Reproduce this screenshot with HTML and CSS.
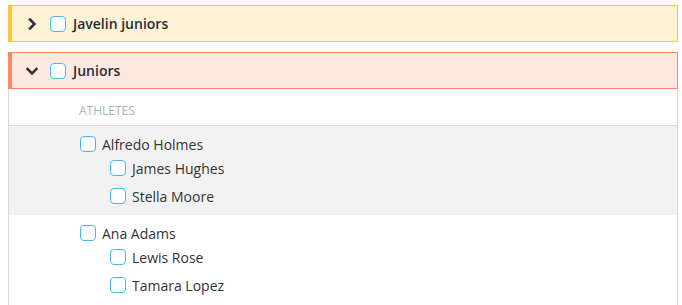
FILE: index.html
```html
<!DOCTYPE html>
<html>
<head>
<meta charset="utf-8">
<link rel="stylesheet" href="styles.css">
</head>
<body>
<div class="tree">
  <div class="group-head head-yellow">
    <span class="chev">
      <svg width="12" height="12" viewBox="0 0 12 12"><polyline points="4,1.5 8.5,6 4,10.5" fill="none" stroke="#333" stroke-width="2.6" stroke-linecap="square"/></svg>
    </span>
    <span class="box"></span>
    <span class="head-label">Javelin juniors</span>
  </div>

  <div class="group-head head-red">
    <span class="chev">
      <svg width="12" height="12" viewBox="0 0 12 12"><polyline points="1.5,4 6,8.5 10.5,4" fill="none" stroke="#333" stroke-width="2.6" stroke-linecap="square"/></svg>
    </span>
    <span class="box"></span>
    <span class="head-label">Juniors</span>
  </div>

  <div class="panel">
    <div class="panel-title">Athletes</div>
    <div class="athlete shaded">
      <div class="row"><span class="box"></span><span class="name">Alfredo Holmes</span></div>
      <div class="children">
        <div class="row"><span class="box"></span><span class="name">James Hughes</span></div>
        <div class="row"><span class="box"></span><span class="name">Stella Moore</span></div>
      </div>
    </div>
    <div class="athlete">
      <div class="row"><span class="box"></span><span class="name">Ana Adams</span></div>
      <div class="children">
        <div class="row"><span class="box"></span><span class="name">Lewis Rose</span></div>
        <div class="row"><span class="box"></span><span class="name">Tamara Lopez</span></div>
      </div>
    </div>
  </div>
</div>
</body>
</html>
```
FILE: styles.css
```css
html, body {
  background: #fff;
}
body {
  margin: 5px 4px 0 8px;
  font-family: "Open Sans", "Liberation Sans", sans-serif;
  font-size: 14px;
  color: #333;
}
.tree {
  display: flex;
  flex-direction: column;
}
.group-head {
  display: flex;
  align-items: center;
  height: 35px;
  padding-left: 14px;
  border: 1px solid;
  border-left-width: 4px;
}
.head-yellow {
  background: #fff3d5;
  border-color: #fbc63c;
  margin-bottom: 10px;
}
.head-red {
  background: #ffe8e0;
  border-color: #ff8663;
}
.chev {
  width: 12px;
  height: 12px;
  display: flex;
  margin-right: 12px;
}
.box {
  box-sizing: border-box;
  width: 16px;
  height: 16px;
  border: 1.5px solid #49b8e4;
  border-radius: 4px;
  background: #fff;
  flex: none;
}
.head-label {
  margin-left: 7px;
  font-weight: 600;
  color: #1f2d3d;
  font-size: 14px;
}
.panel {
  border-left: 1px solid #d8d8d8;
  border-right: 1px solid #d8d8d8;
  height: 216px;
}
.panel-title {
  height: 37px;
  box-sizing: border-box;
  padding-top: 15px;
  padding-left: 70px;
  font-size: 12px;
  line-height: 13px;
  text-transform: uppercase;
  color: #a9b3b8;
  border-bottom: 1px solid #dcdcdc;
}
.athlete {
  padding: 6px 0 7px 71px;
}
.shaded {
  background: #f2f2f2;
}
.row {
  display: flex;
  align-items: center;
  height: 24px;
}
.name {
  margin-left: 6px;
  color: #333;
}
.children {
  display: flex;
  flex-direction: column;
  gap: 4px;
  padding-left: 30px;
}
```
